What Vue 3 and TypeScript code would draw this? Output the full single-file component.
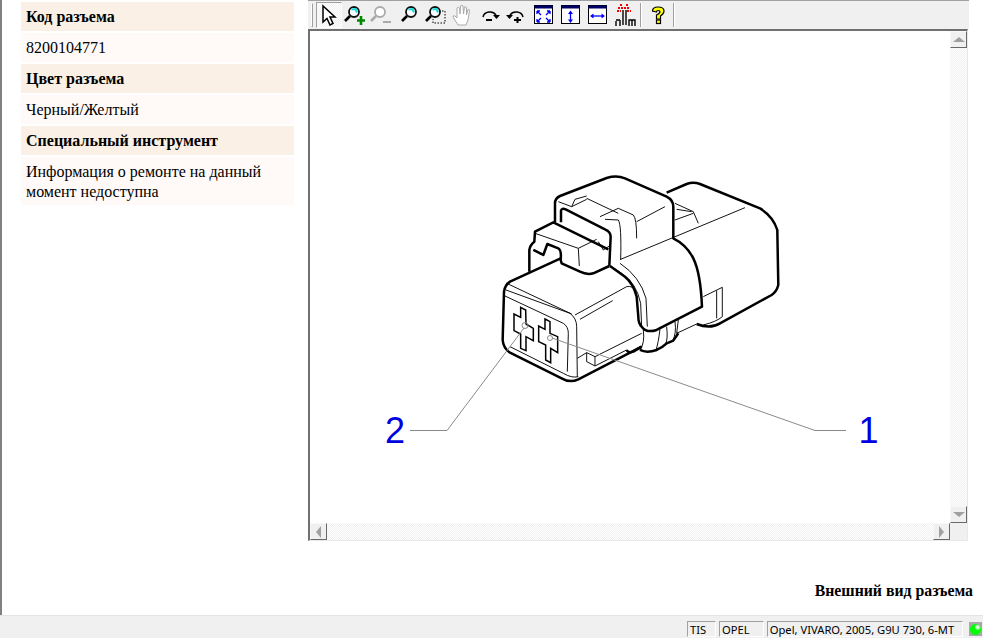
<script setup lang="ts">
interface InfoBlock {
  title: string;
  lines: string[];
}

const blocks: InfoBlock[] = [
  { title: 'Код разъема', lines: ['8200104771'] },
  { title: 'Цвет разъема', lines: ['Черный/Желтый'] },
  { title: 'Специальный инструмент', lines: ['Информация о ремонте на данный', 'момент недоступна'] },
];

const statusCells = [
  { text: 'TIS', cls: 'cell-tis' },
  { text: 'OPEL', cls: 'cell-make' },
  { text: 'Opel, VIVARO, 2005, G9U 730, 6-MT', cls: 'cell-car' },
];

// coordinates are 3x page pixels, taken from the drawing
const thickLines = [
  'M195,157 L195,100 Q195,85 210,78 L350,24 Q380,15 405,25 L530,80 Q550,90 550,110 L550,205 Q590,225 610,265 Q632,310 636,410 L500,480 Q470,490 455,470 Q445,460 445,440 L440,380 Q430,340 405,320 L360,288',
  'M213,157 L213,122 Q215,113 227,118 L345,178 Q362,185 362,200 L358,288',
  'M118,305 L118,240 Q120,225 133,215 L135,185 L190,157 L355,238',
  'M130,240 L160,255 L172,222 L205,235 Q215,240 212,270 L215,280 L270,305 Q290,315 310,310 L358,288',
  'M212,265 L60,335 Q45,345 42,365 L38,510 Q40,535 60,548 L215,625 Q240,640 265,628 L455,530',
  'M530,68 L590,42 Q610,35 630,42 L810,115 Q850,140 862,180 L865,345 Q860,365 845,375 L690,460 Q660,478 620,462',
  'M455,530 L430,545 Q415,550 410,540',
  'M450,540 Q470,550 500,540 Q520,530 530,520 L550,512 L565,490',
];

const mediumLines = [
  'M92,412 L107,420 L108,462 L130,475 L130,512 L108,500 L108,542 L92,535 L92,492 L72,482 L72,432 L92,442 Z',
  'M165,447 L180,455 L180,490 L203,500 L203,548 L182,535 L182,578 L167,570 L167,525 L146,515 L146,468 L165,478 Z',
];

const thinLines = [
  'M205,95 L245,110 L290,88 M245,110 L255,88 L290,78 M290,85 L385,130',
  'M330,140 L385,115 L430,135 Q440,145 440,205 M345,148 L385,150 Q395,165 392,270 M440,155 L525,110',
  'M392,268 L765,113 M555,100 L610,125 L625,160 M560,118 L605,125 M555,150 L610,130',
  'M365,290 L395,310 Q440,340 452,400 L455,470 M390,280 Q450,320 468,385 L472,470',
  'M50,340 L245,432 M48,360 L240,430 Q260,445 260,470 L262,620 M45,378 L220,460 Q235,470 235,490 L232,605 M60,530 L220,610 Q245,625 265,620',
  'M255,435 L410,350 Q430,345 440,370 M270,448 L368,392',
  'M135,190 L265,235 L268,288 M265,235 L320,208 M325,215 L340,240 L358,228',
  'M640,380 L697,352 L697,440 Q680,455 640,465 M680,362 L680,445',
  'M510,478 Q505,520 498,540 M530,470 Q535,510 525,525 M555,455 Q560,490 548,512 M460,480 Q465,520 450,540 M565,450 L560,490 L620,462',
  'M290,548 L315,560 L315,588 L290,575 Z M315,560 L455,490 M315,588 L410,540 M290,548 L262,565',
];
</script>

<template>
  <div class="page">
    <div class="content">
      <aside class="side">
        <template v-for="block in blocks" :key="block.title">
          <div class="info-title">{{ block.title }}</div>
          <div class="info-body">
            <div v-for="line in block.lines" :key="line">{{ line }}</div>
          </div>
        </template>
      </aside>

      <section class="viewer">
        <div class="toolbar">
          <span class="grip"></span>
          <div class="tool-group">
            <span class="tool pressed">
              <svg width="24" height="24" viewBox="0 0 24 24"><path d="M6 3 L6 19 L10 15.5 L13 22 L16 20.5 L13 14 L18 14 Z" fill="#fff" stroke="#000" stroke-width="1.5" /></svg>
            </span>
            <span class="tool">
              <svg width="24" height="24" viewBox="0 0 24 24">
                <circle cx="11" cy="9" r="5" fill="#fff" stroke="#111" stroke-width="1.8" />
                <path d="M8.500 6.500 L12.500 6 L14 9.500" fill="none" stroke="#1dd" stroke-width="2" />
                <path d="M7 13 L2 18" stroke="#000" stroke-width="2.600" />
                <path d="M18 13 V22 M14 17.500 H22" stroke="#080" stroke-width="2.600" />
              </svg>
            </span>
            <span class="tool">
              <svg width="24" height="24" viewBox="0 0 24 24">
                <circle cx="11" cy="9" r="5" fill="#fff" stroke="#aaa" stroke-width="1.800" />
                <path d="M7 13 L2 18" stroke="#aaa" stroke-width="2.600" />
                <path d="M14 19 H22" stroke="#aaa" stroke-width="2" />
              </svg>
            </span>
          </div>
          <div class="tool-group group-view">
            <span class="tool">
              <svg width="24" height="24" viewBox="0 0 24 24">
                <circle cx="13" cy="9" r="5" fill="#fff" stroke="#111" stroke-width="1.800" />
                <path d="M10.500 6.500 L14.500 6 L16 9.500" fill="none" stroke="#1dd" stroke-width="2" />
                <path d="M9 13 L4 18" stroke="#000" stroke-width="2.600" />
              </svg>
            </span>
            <span class="tool">
              <svg width="24" height="24" viewBox="0 0 24 24">
                <circle cx="11" cy="9" r="5" fill="#fff" stroke="#111" stroke-width="1.800" />
                <path d="M8.500 6.500 L12.500 6 L14 9.500" fill="none" stroke="#1dd" stroke-width="2" />
                <path d="M7 13 L2 18" stroke="#000" stroke-width="2.600" />
                <path d="M15 8 H21 V20 H9 V16" fill="none" stroke="#000" stroke-dasharray="1.500 1.500" />
              </svg>
            </span>
            <span class="tool">
              <svg width="24" height="24" viewBox="0 0 24 24">
                <path d="M8 22 L3 14 Q3 12 5 13 L7 15 L7 5 Q8.500 3.500 9.500 5 L10 11 L10.500 3 Q12 1.500 13 3 L13.500 11 L14.500 4 Q16 3 16.500 5 L16.500 12 L18 6.500 Q19.500 6 19.500 8 L18 17 L16 22 Z" fill="#fff" stroke="#aaa" />
              </svg>
            </span>
          </div>
          <div class="tool-group group-rotate">
            <span class="tool">
              <svg width="24" height="24" viewBox="0 0 24 24">
                <path d="M5 14 A7 6 0 0 1 18 12" fill="none" stroke="#000" stroke-width="1.500" />
                <path d="M15 12 H22 L18.500 16 Z" fill="#000" />
                <path d="M8 17 H14" stroke="#000" stroke-width="2" />
              </svg>
            </span>
            <span class="tool">
              <svg width="24" height="24" viewBox="0 0 24 24">
                <path d="M19 14 A7 6 0 0 0 6 12" fill="none" stroke="#000" stroke-width="1.500" />
                <path d="M2 12 H9 L5.500 16 Z" fill="#000" />
                <path d="M10 17 H17 M13.500 14 V20" stroke="#000" stroke-width="2" />
              </svg>
            </span>
          </div>
          <div class="tool-group group-fit">
            <span class="tool">
              <svg width="24" height="24" viewBox="0 0 24 24">
                <rect x="2.500" y="2.500" width="18" height="18" fill="#fff" stroke="#000" />
                <rect x="2.500" y="2.500" width="18" height="3" fill="#006" />
                <path d="M5 8 L9 12 M5 8 V11 M5 8 H8 M18 8 L14 12 M18 8 V11 M18 8 H15 M5 19 L9 15 M5 19 V16 M5 19 H8 M18 19 L14 15 M18 19 V16 M18 19 H15" fill="none" stroke="#00f" stroke-width="1.300" />
              </svg>
            </span>
            <span class="tool">
              <svg width="24" height="24" viewBox="0 0 24 24">
                <rect x="2.500" y="2.500" width="18" height="18" fill="#fff" stroke="#000" />
                <rect x="2.500" y="2.500" width="18" height="3" fill="#006" />
                <path d="M11.500 9 V18" stroke="#00f" stroke-width="1.300" />
                <path d="M11.500 7.500 L14 11 H9 Z M11.500 20 L14 16.500 H9 Z" fill="#00f" />
              </svg>
            </span>
            <span class="tool">
              <svg width="24" height="24" viewBox="0 0 24 24">
                <rect x="2.500" y="2.500" width="18" height="18" fill="#fff" stroke="#000" />
                <rect x="2.500" y="2.500" width="18" height="3" fill="#006" />
                <path d="M6 13 H17" stroke="#00f" stroke-width="1.300" />
                <path d="M4 13 L7.500 10.500 V15.500 Z M19 13 L15.500 10.500 V15.500 Z" fill="#00f" />
              </svg>
            </span>
            <span class="tool">
              <svg width="24" height="24" viewBox="0 0 24 24">
                <path d="M7 2 H9 M13 2 H15 M5 5 H17 M4 8 H8 M14 8 H18" stroke="#e00" stroke-width="2" stroke-dasharray="2 1" />
                <path d="M10 7 V22 M13 7 V22 M3 23 V18 M7 23 V17 M3 17 H7 M16 23 V17 H22 V23 M19 17 V23" fill="none" stroke="#000" stroke-width="1.400" />
              </svg>
            </span>
          </div>
          <span class="separator"></span>
          <span class="tool">
            <svg width="24" height="24" viewBox="0 0 24 24">
              <path d="M6.500 8 Q6.500 4 12 4 Q18 4 18 8 Q18 11 14.500 13 L14.500 16 H10.500 L10.500 12 Q14 10.500 14 8.500 Q14 7.500 12 7.500 Q10.500 7.500 10.500 9 Z" fill="#ff0" stroke="#000" stroke-width="1.200" />
              <rect x="10.500" y="17" width="4" height="3.500" fill="#ff0" stroke="#000" stroke-width="1.200" />
            </svg>
          </span>
          <span class="separator"></span>
        </div>

        <div class="frame">
          <div class="frame-row">
            <div class="canvas">
              <svg class="drawing" width="640" height="492" viewBox="310 31 640 492">
                <g transform="translate(490 170) scale(0.3333)" fill="none">
                  <path v-for="d in thickLines" :key="d" :d="d" stroke="#000" stroke-width="7.500" stroke-linejoin="round" />
                  <path v-for="d in mediumLines" :key="d" :d="d" stroke="#000" stroke-width="4.500" />
                  <path v-for="d in thinLines" :key="d" :d="d" stroke="#000" stroke-width="2.800" />
                </g>
                <g fill="none" stroke="#8a8a8a">
                  <path d="M410 430.500 H447 L524 328" />
                  <path d="M846 430.500 H815 L552 338" />
                  <circle cx="525" cy="325.500" r="3" />
                  <circle cx="550" cy="338" r="2.500" />
                </g>
                <text class="callout" x="385" y="443">2</text>
                <text class="callout" x="858.500" y="443">1</text>
              </svg>
            </div>
            <div class="vscroll">
              <span class="scroll-btn"><i class="arrow arrow-up"></i></span>
              <span class="track"></span>
              <span class="scroll-btn"><i class="arrow arrow-down"></i></span>
            </div>
          </div>
          <div class="hscroll">
            <span class="scroll-btn"><i class="arrow arrow-left"></i></span>
            <span class="track"></span>
            <span class="scroll-btn"><i class="arrow arrow-right"></i></span>
            <span class="corner"></span>
          </div>
        </div>

        <div class="caption">Внешний вид разъема</div>
      </section>
    </div>

    <footer class="statusbar">
      <span v-for="cell in statusCells" :key="cell.text" class="status-cell" :class="cell.cls">{{ cell.text }}</span>
      <span class="led"><i></i></span>
    </footer>
  </div>
</template>

<style scoped>
.page {
  width: 983px;
  height: 638px;
  display: flex;
  flex-direction: column;
  background: #fff;
  overflow: hidden;
}

.content {
  flex: 1;
  display: flex;
  min-height: 0;
  border-left: 2px solid #808080;
}

.side {
  width: 273px;
  margin: 2px 14px 0 19px;
  font: 16px/20px "Liberation Serif", serif;
  color: #000;
}

.info-title {
  height: 29px;
  padding: 5px 0 0 5px;
  box-sizing: border-box;
  background: #faf0e6;
  font-weight: 700;
}

.info-body {
  min-height: 29px;
  margin: 2px 0;
  padding: 5px 5px 3px;
  box-sizing: border-box;
  background: #fffaf8;
}

.viewer {
  width: 661px;
  display: flex;
  flex-direction: column;
}

.toolbar {
  height: 29px;
  display: flex;
  align-items: center;
  box-sizing: border-box;
  border-top: 1px solid #a0a0a0;
  background: #f0f0f0;
}

.grip {
  width: 2px;
  height: 24px;
  margin: 0 3px;
  border: 1px solid #fff;
  border-right-color: #a0a0a0;
  border-bottom-color: #a0a0a0;
  box-sizing: border-box;
}

.tool-group {
  display: flex;
}

.group-view {
  margin-left: 3px;
}

.group-rotate,
.group-fit {
  margin-left: 2px;
}

.group-fit {
  gap: 1px;
}

.tool {
  width: 26px;
  height: 26px;
  display: flex;
  align-items: center;
  justify-content: center;
  box-sizing: border-box;
}

.pressed {
  border: 1px solid;
  border-color: #a0a0a0 #fff #fff #a0a0a0;
  background: repeating-conic-gradient(#f0f0f0 0 25%, #fff 0 50%) 0 0 / 2px 2px;
}

.separator {
  width: 2px;
  height: 24px;
  margin: 0 3px 0 2px;
  box-sizing: border-box;
  background: #a0a0a0;
  border-right: 1px solid #fff;
}

.frame {
  height: 512px;
  margin-right: 1px;
  display: flex;
  flex-direction: column;
  box-sizing: border-box;
  border-top: 2px solid #707070;
  border-left: 2px solid #707070;
  border-right: 1px solid #e8e8e8;
  border-bottom: 1px solid #e8e8e8;
}

.frame-row {
  flex: 1;
  display: flex;
  min-height: 0;
}

.canvas {
  flex: 1;
  overflow: hidden;
  background: #fff;
}

.drawing {
  display: block;
}

.callout {
  font: 36px "Liberation Sans", sans-serif;
  fill: #0000e0;
}

.vscroll {
  width: 17px;
  display: flex;
  flex-direction: column;
}

.hscroll {
  height: 17px;
  display: flex;
}

.track {
  flex: 1;
  background: repeating-conic-gradient(#f0f0f0 0 25%, #fff 0 50%) 0 0 / 2px 2px;
}

.scroll-btn {
  width: 17px;
  height: 17px;
  flex: none;
  display: flex;
  align-items: center;
  justify-content: center;
  box-sizing: border-box;
  background: #f0f0f0;
  border: 1px solid;
  border-color: #f8f8f8 #696969 #696969 #f8f8f8;
}

.corner {
  width: 17px;
  background: #f0f0f0;
}

.arrow {
  width: 0;
  height: 0;
  border: 0 solid transparent;
}

.arrow-up {
  border-width: 0 6px 5px;
  border-bottom-color: #a0a0a0;
}

.arrow-down {
  border-width: 5px 6px 0;
  border-top-color: #a0a0a0;
}

.arrow-left {
  border-width: 6px 5px 6px 0;
  border-right-color: #a0a0a0;
}

.arrow-right {
  border-width: 6px 0 6px 5px;
  border-left-color: #a0a0a0;
}

.caption {
  margin-top: 41px;
  margin-right: -4px;
  text-align: right;
  font: 700 15.8px/18px "Liberation Serif", serif;
  color: #000;
}

.statusbar {
  height: 23px;
  display: flex;
  align-items: flex-end;
  flex: none;
  box-sizing: border-box;
  padding: 0 1px 1px 687px;
  background: #f0f0f0;
  border-top: 1px solid #e4e4e4;
}

.status-cell {
  height: 16px;
  display: flex;
  align-items: center;
  padding-left: 2px;
  margin-right: 3px;
  box-sizing: border-box;
  white-space: nowrap;
  border: 1px solid;
  border-color: #a0a0a0 #fff #fff #a0a0a0;
  font: 11.2px "Noto Sans", sans-serif;
  color: #000;
}

.cell-tis {
  width: 29px;
}

.cell-make {
  width: 45px;
}

.cell-car {
  width: 197px;
}

.led {
  width: 13px;
  height: 14px;
  margin: 0 0 1px 3px;
  display: flex;
  align-items: center;
  justify-content: center;
  background: #a8a8a8;
}

.led i {
  width: 11px;
  height: 11px;
  border-radius: 50%;
  background: radial-gradient(circle at 70% 30%, #d8ffd8 0 12%, #00ff00 30%);
}
</style>
